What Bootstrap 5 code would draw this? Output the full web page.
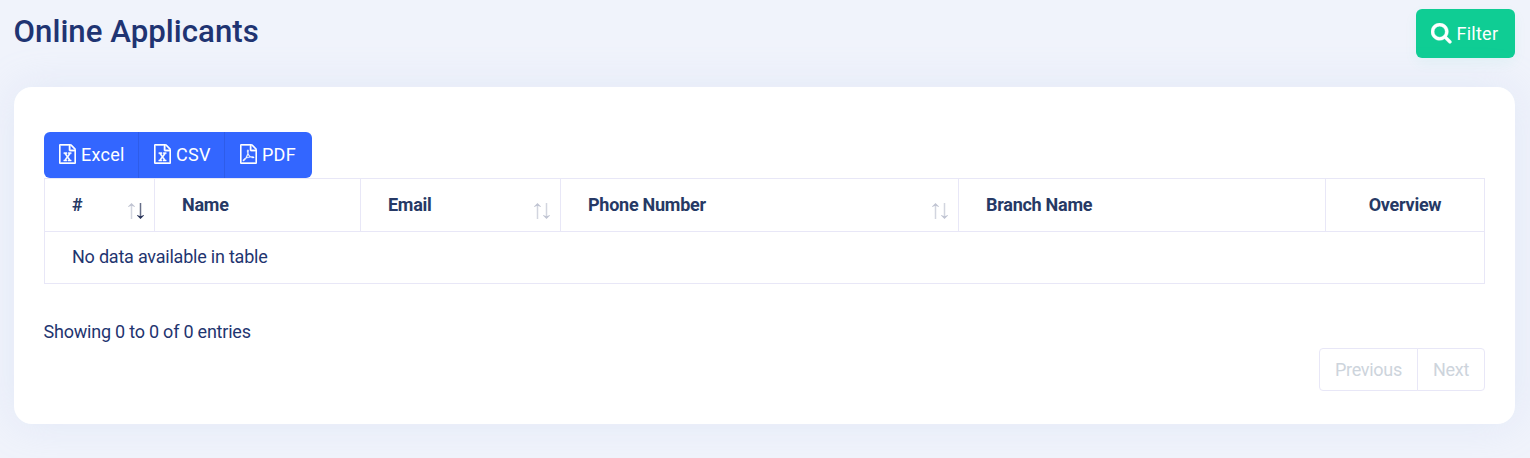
<!DOCTYPE html>
<html lang="en">
<head>
<meta charset="utf-8">
<title>Online Applicants</title>
<link href="https://cdn.jsdelivr.net/npm/bootstrap@5.3.0/dist/css/bootstrap.min.css" rel="stylesheet">
<style>
body{font-family:Roboto,"Liberation Sans",sans-serif;font-size:18px;line-height:27px;letter-spacing:-.22px;color:#1f3570;background:#f0f3fb;height:458px;overflow:hidden}
.page{padding:9px 15px 0 14px}
.page-title{font-size:31.2px;font-weight:500;line-height:38px;margin-top:4px;margin-left:-.5px;letter-spacing:.03px;color:#1f3472}
.btn{--bs-btn-font-size:18px;--bs-btn-line-height:27px;border:0;color:#fff;font-weight:400;letter-spacing:.25px}
.btn svg{fill:currentColor;flex:none}
.btn-filter,.btn-filter:hover{background:#0fcd94;color:#fff;width:99px;height:49px;border-radius:6px;padding:0 0 0 15px;box-shadow:0 5px 14px rgba(15,205,148,.06)}
.btn-filter svg{margin-right:5px}
.panel{margin-top:29px;height:337px;border:0;border-radius:18px;box-shadow:0 0 38px rgba(190,202,235,.27)}
.panel .card-body{padding:45px 30px 0}
.exports{height:46px;width:268px}
.exports .btn,.exports .btn:hover{background:#3366ff;color:#fff;border-radius:6px;padding:0 0 2px 15px}
.exports .btn+.btn{border-left:1px solid #2e5ce9}
.exports svg{margin-right:5px}
.exports .w-excel{flex:0 0 95px}.exports .w-csv{flex:0 0 87px}.exports .w-pdf{flex:0 0 88px}
.applicants{--bs-table-color:#1f3570;--bs-table-bg:transparent;border-color:#e8e7f7;table-layout:fixed}
.applicants th,.applicants td{padding:0 27px 2px;height:52px;border-color:#e8e7f7}
.applicants thead th{height:53px;vertical-align:middle;font-weight:700;color:#263965;position:relative;letter-spacing:-.26px}
.sorter{position:absolute;right:10px;bottom:12px}
.info{margin:34px 0 3px -.5px}
.pager .page-link{height:43px;padding:7px 15px;font-size:18px;letter-spacing:-.29px;color:#cdd4dc;background:#fff;border-color:#e8e7f7}
.pager{--bs-pagination-border-radius:4px}
</style>
</head>
<body>
<svg width="0" height="0" class="position-absolute">
<symbol id="excel" viewBox="128 0 1536 1792"><path d="M1596 380q28 28 48 76t20 88v1152q0 40-28 68t-68 28h-1344q-40 0-68-28t-28-68v-1600q0-40 28-68t68-28h896q40 0 88 20t76 48zm-444-244v376h376q-10-29-22-41l-313-313q-12-12-41-22zm384 1528v-1024h-416q-40 0-68-28t-28-68v-416h-768v1536h1280zm-979-234v106h281v-106h-75l103-161q5-7 10-16.5t7.5-13.5 3.5-4h2q1 4 5 10 2 4 4.5 7.5t6 8 6.5 8.5l107 161h-76v106h291v-106h-68l-192-273 195-282h67v-107h-279v107h74l-103 159q-4 7-10 16.5t-9 13.5l-2 3h-2q-1-4-5-10-6-11-17-23l-106-159h76v-107h-290v107h68l189 272-194 283h-68z" stroke="currentColor" stroke-width="36"/></symbol>
<symbol id="pdf" viewBox="128 0 1536 1792"><path d="M1596 380q28 28 48 76t20 88v1152q0 40-28 68t-68 28h-1344q-40 0-68-28t-28-68v-1600q0-40 28-68t68-28h896q40 0 88 20t76 48zm-444-244v376h376q-10-29-22-41l-313-313q-12-12-41-22zm384 1528v-1024h-416q-40 0-68-28t-28-68v-416h-768v1536h1280zm-514-593q33 26 84 56 59-7 117-7 147 0 177 49 16 22 2 52 0 1-1 2l-2 2v1q-6 38-71 38-48 0-115-20t-130-53q-221 24-392 83-153 262-242 262-15 0-28-7l-24-12q-1-1-6-5-10-10-6-36 9-40 56-91.5t132-96.5q14-9 23 6 2 2 2 4 52-85 107-197 68-136 104-262-24-82-30.5-159.5t6.5-127.5q11-40 42-40h22q23 0 35 15 18 21 9 68-2 6-4 8 1 3 1 8v30q-2 123-14 192 55 164 146 238zm-576 411q52-24 137-158-51 40-87.5 84t-49.5 74zm398-920q-15 42-2 132 1-7 7-44 0-3 7-43 1-4 4-8-1-1-1-2t-1-2-1-3q-1-22-13-36 0 1-1 2v2zm-124 661q135-54 284-81-2-1-13-9.5t-16-13.5q-76-67-127-176-27 86-83 197-30 56-45 83zm646-16q-24-24-140-24 76 28 124 28 14 0 18-1 0-1-2-3z" stroke="currentColor" stroke-width="30"/></symbol>
<symbol id="up" viewBox="0 0 7 16"><path d="M3.5 2v14" stroke="currentColor" stroke-width="1.5" opacity=".7"/><path d="M3.5 0L7 3.5v.6L3.5 2.7 0 4.1v-.6z" fill="currentColor"/></symbol>
</svg>
<main class="page">
  <header class="d-flex justify-content-between align-items-start">
    <h1 class="page-title mb-0">Online Applicants</h1>
    <button class="btn btn-filter d-flex align-items-center">
      <svg width="20.5" height="20.5" viewBox="64 128 1664 1664"><path d="M1216 832q0-185-131.5-316.5t-316.5-131.5-316.5 131.5-131.5 316.5 131.5 316.5 316.5 131.5 316.5-131.5 131.5-316.5zm512 832q0 52-38 90t-90 38q-54 0-90-38l-343-342q-179 124-399 124-143 0-273.5-55.5t-225-150-150-225-55.5-273.5 55.5-273.5 150-225 225-150 273.5-55.5 273.5 55.5 225 150 150 225 55.5 273.5q0 220-124 399l343 343q37 37 37 90z" stroke="currentColor" stroke-width="30"/></svg>Filter</button>
  </header>
  <section class="card panel">
    <div class="card-body">
      <div class="btn-group exports d-flex">
        <button class="btn d-flex align-items-center w-excel"><svg width="17" height="20"><use href="#excel"/></svg>Excel</button>
        <button class="btn d-flex align-items-center w-csv"><svg width="17" height="20"><use href="#excel"/></svg>CSV</button>
        <button class="btn d-flex align-items-center w-pdf"><svg width="17" height="20"><use href="#pdf"/></svg>PDF</button>
      </div>
      <table class="table table-bordered applicants align-middle mb-0">
        <colgroup><col style="width:110px"><col style="width:206px"><col style="width:200px"><col style="width:398px"><col style="width:367px"><col></colgroup>
        <thead><tr>
          <th># <svg class="sorter" width="16" height="16"><use href="#up" width="7" height="16" color="#c0c4d2"/><g transform="rotate(180 12.5 8)"><use href="#up" x="9" width="7" height="16" color="#263157"/></g></svg></th>
          <th>Name</th>
          <th>Email <svg class="sorter" width="16" height="16"><use href="#up" width="7" height="16" color="#c0c4d2"/><g transform="rotate(180 12.5 8)"><use href="#up" x="9" width="7" height="16" color="#c0c4d2"/></g></svg></th>
          <th>Phone Number <svg class="sorter" width="16" height="16"><use href="#up" width="7" height="16" color="#c0c4d2"/><g transform="rotate(180 12.5 8)"><use href="#up" x="9" width="7" height="16" color="#c0c4d2"/></g></svg></th>
          <th>Branch Name</th>
          <th class="text-center">Overview</th>
        </tr></thead>
        <tbody><tr><td colspan="6">No data available in table</td></tr></tbody>
      </table>
      <div class="info">Showing 0 to 0 of 0 entries</div>
      <ul class="pagination pager justify-content-end mb-0">
        <li class="page-item disabled"><a class="page-link">Previous</a></li>
        <li class="page-item disabled"><a class="page-link">Next</a></li>
      </ul>
    </div>
  </section>
</main>
<script src="https://cdn.jsdelivr.net/npm/bootstrap@5.3.0/dist/js/bootstrap.bundle.min.js"></script>
</body>
</html>
